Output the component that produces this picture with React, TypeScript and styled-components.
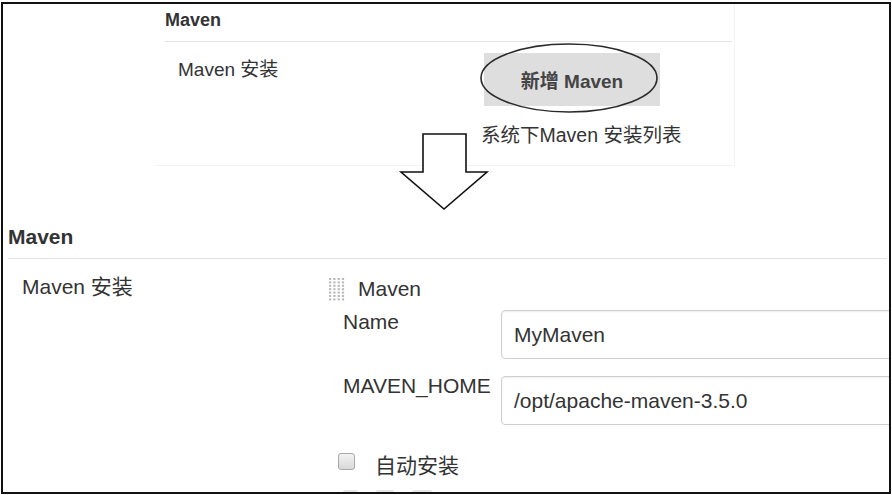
import React from 'react';
import styled, { createGlobalStyle } from 'styled-components';

const GlobalStyle = createGlobalStyle`
  html, body {
    margin: 0;
    padding: 0;
    background: #ffffff;
  }
  body {
    font-family: 'Liberation Sans', 'Noto Sans CJK SC', sans-serif;
    color: #333;
  }
`;

const Frame = styled.div`
  position: relative;
  box-sizing: border-box;
  width: 890px;
  height: 492px;
  margin: 2px 0 0 1px;
  border: 2px solid #111;
  overflow: hidden;
  background: #fff;
`;

/* small screenshot pasted at the top */
const TopPanel = styled.div`
  box-sizing: border-box;
  width: 580px;
  height: 162px;
  margin-left: 152px;
  border-right: 1px solid #f3f3f3;
  border-bottom: 1px solid #f3f3f3;
`;

const SectionTitle = styled.div<{ $size: number; $top: number; $bottom: number; $indent: number }>`
  margin: 0 2px 0 ${p => p.$indent}px;
  padding: ${p => p.$top}px 0 ${p => p.$bottom}px;
  font-size: ${p => p.$size}px;
  line-height: 24px;
  font-weight: bold;
  color: #333;
  border-bottom: 1px solid #e2e2e2;
`;

const TopRow = styled.div`
  display: grid;
  grid-template-columns: 306px auto;
  padding: 11px 0 0 23px;
`;

const Label = styled.div<{ $size: number; $top?: number }>`
  font-size: ${p => p.$size}px;
  line-height: 24px;
  margin-top: ${p => p.$top ?? 0}px;
  color: #333;
`;

const AddColumn = styled.div`
  position: relative;
  display: flex;
  flex-direction: column;
  align-items: flex-start;
`;

const AddButton = styled.div`
  width: 176px;
  height: 53px;
  display: flex;
  align-items: center;
  justify-content: center;
  background: #dedede;
  font-size: 19px;
  font-weight: bold;
  color: #444;
`;

const Caption = styled.div`
  margin: 17px 0 0 -3px;
  font-size: 19.5px;
  line-height: 24px;
  color: #333;
`;

const Ellipse = styled.svg`
  position: absolute;
  left: -3px;
  top: -9px;
  overflow: visible;
`;

const Arrow = styled.svg`
  position: absolute;
  left: 393px;
  top: 124px;
  overflow: visible;
`;

const Bottom = styled.div`
  padding-left: 5px;
`;

const InstallRow = styled.div`
  display: grid;
  grid-template-columns: 306px 1fr;
  padding: 16px 0 0 14px;
`;

const InstallBody = styled.div`
  display: flex;
  flex-direction: column;
`;

const HandleRow = styled.div`
  display: flex;
  align-items: center;
  gap: 12px;
  height: 28px;
  font-size: 21px;
  color: #333;
`;

const Fields = styled.div`
  display: flex;
  flex-direction: column;
  gap: 17px;
  margin: 7px 0 0 15px;
`;

const FieldRow = styled.div`
  display: grid;
  grid-template-columns: 158px 420px;
  align-items: start;
`;

const FieldInput = styled.div`
  box-sizing: border-box;
  height: 49px;
  display: flex;
  align-items: center;
  padding-left: 12px;
  border: 1px solid #cfcfcf;
  border-radius: 4px;
  box-shadow: inset 0 1px 2px rgba(0, 0, 0, 0.08);
  font-size: 21px;
  color: #333;
`;

const CheckRow = styled.div`
  display: flex;
  align-items: center;
  gap: 20px;
  margin: 24px 0 0 10px;
  font-size: 21px;
  color: #333;
`;

const CheckBox = styled.span`
  box-sizing: border-box;
  width: 17px;
  height: 17px;
  margin-bottom: 6px;
  border: 1px solid #a9a9a9;
  border-radius: 3px;
  background: linear-gradient(#f2f2f2, #d9d9d9);
`;

const FadedRow = styled.div`
  display: flex;
  gap: 18px;
  margin: 11px 0 0 15px;
`;

const Chip = styled.span<{ $w: number }>`
  width: ${p => p.$w}px;
  height: 10px;
  background: #e6e6e6;
  border-radius: 2px;
`;

const DragHandle = () => (
  <svg width="18" height="25" viewBox="0 0 18 25">
    {Array.from({ length: 7 }).map((_, r) =>
      Array.from({ length: 4 }).map((__, c) => (
        <rect key={`${r}-${c}`} x={1 + c * 4.3} y={1 + r * 3.4} width="2.2" height="2" fill="#b8b8b8" />
      ))
    )}
  </svg>
);

export default function App() {
  return (
    <>
      <GlobalStyle />
      <Frame>
        <TopPanel>
          <SectionTitle $size={18} $top={4} $bottom={9} $indent={10}>Maven</SectionTitle>
          <TopRow>
            <Label $size={19} $top={5}>Maven 安装</Label>
            <AddColumn>
              <AddButton>新增 Maven</AddButton>
              <Caption>系统下Maven 安装列表</Caption>
              <Ellipse width="176" height="68">
                <ellipse cx="88" cy="34" rx="88" ry="34" fill="none" stroke="#2a2a2a" strokeWidth="1.6" />
              </Ellipse>
            </AddColumn>
          </TopRow>
        </TopPanel>

        <Arrow width="92" height="80">
          <polygon
            points="27,6 70,6 70,44 91,44 48,81 5,44 27,44"
            fill="#fff"
            stroke="#111"
            strokeWidth="1.6"
            strokeLinejoin="miter"
          />
        </Arrow>

        <Bottom>
          <SectionTitle $size={21} $top={59} $bottom={9} $indent={0}>Maven</SectionTitle>
          <InstallRow>
            <Label $size={21}>Maven 安装</Label>
            <InstallBody>
              <HandleRow>
                <DragHandle />
                <span>Maven</span>
              </HandleRow>
              <Fields>
                <FieldRow>
                  <Label $size={21}>Name</Label>
                  <FieldInput>MyMaven</FieldInput>
                </FieldRow>
                <FieldRow>
                  <Label $size={21} $top={-2}>MAVEN_HOME</Label>
                  <FieldInput>/opt/apache-maven-3.5.0</FieldInput>
                </FieldRow>
              </Fields>
              <CheckRow>
                <CheckBox />
                <span>自动安装</span>
              </CheckRow>
              <FadedRow>
                <Chip $w={15} />
                <Chip $w={18} />
                <Chip $w={20} />
              </FadedRow>
            </InstallBody>
          </InstallRow>
        </Bottom>
      </Frame>
    </>
  );
}
